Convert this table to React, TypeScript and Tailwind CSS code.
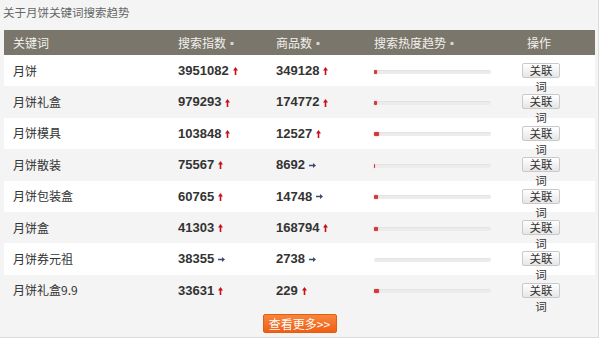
import type { ReactNode } from "react";

type Trend = "up" | "flat";

const ROWS: {
  word: string;
  index: string;
  indexTrend: Trend;
  goods: string;
  goodsTrend: Trend;
  heat: number;
}[] = [
  { word: "月饼", index: "3951082", indexTrend: "up", goods: "349128", goodsTrend: "up", heat: 3 },
  { word: "月饼礼盒", index: "979293", indexTrend: "up", goods: "174772", goodsTrend: "up", heat: 3 },
  { word: "月饼模具", index: "103848", indexTrend: "up", goods: "12527", goodsTrend: "up", heat: 5 },
  { word: "月饼散装", index: "75567", indexTrend: "up", goods: "8692", goodsTrend: "flat", heat: 1 },
  { word: "月饼包装盒", index: "60765", indexTrend: "up", goods: "14748", goodsTrend: "flat", heat: 4 },
  { word: "月饼盒", index: "41303", indexTrend: "up", goods: "168794", goodsTrend: "up", heat: 4 },
  { word: "月饼券元祖", index: "38355", indexTrend: "flat", goods: "2738", goodsTrend: "flat", heat: 0 },
  { word: "月饼礼盒9.9", index: "33631", indexTrend: "up", goods: "229", goodsTrend: "up", heat: 5 },
];

const CJK = "font-['Tahoma','Noto_Sans_CJK_SC',sans-serif]";

function Arrow({ trend }: { trend: Trend }) {
  if (trend === "up") {
    return (
      <svg width="5" height="8" viewBox="0 0 5 8" className="ml-[4px] mt-[1px]">
        <path d="M2.5 0 L5 3.5 L3.3 3.5 L3.3 8 L1.7 8 L1.7 3.5 L0 3.5 Z" fill="#c8101a" />
      </svg>
    );
  }
  return (
    <svg width="7" height="5" viewBox="0 0 7 5" className="ml-[4px] mt-[1px]">
      <path d="M7 2.5 L4 0 L4 1.7 L0 1.7 L0 3.3 L4 3.3 L4 5 Z" fill="#3b4a72" />
    </svg>
  );
}

function SortMark() {
  return (
    <svg width="4" height="5" viewBox="0 0 4 5" className="ml-[4px] mt-[1px]">
      <rect x="0.5" y="1" width="3" height="3" fill="#d8d6cf" />
    </svg>
  );
}

function HeadCell({ children, className }: { children: ReactNode; className?: string }) {
  return <div className={`flex items-center ${className ?? ""}`}>{children}</div>;
}

export default function App() {
  return (
    <div className={`h-[339px] w-[600px] bg-white ${CJK}`}>
      <div className="flex h-[338px] w-[599px] flex-col border-r border-b border-[#dcdcdc] bg-[#f4f4f4]">
        <div className="flex h-[30px] items-start pl-[3px] pt-[4px] text-[11.5px] leading-[16px] text-[#666]">
          关于月饼关键词搜索趋势
        </div>

        <div className="ml-[4px] w-[591px]">
          <div className="grid h-[25px] grid-cols-[174px_98px_98px_126px_95px] bg-[#7a766b] text-[12px] text-[#f2f1ec]">
            <HeadCell className="pl-[9px]">关键词</HeadCell>
            <HeadCell>
              搜索指数
              <SortMark />
            </HeadCell>
            <HeadCell>
              商品数
              <SortMark />
            </HeadCell>
            <HeadCell>
              搜索热度趋势
              <SortMark />
            </HeadCell>
            <HeadCell className="pl-[27px]">操作</HeadCell>
          </div>

          {ROWS.map((r, i) => (
            <div
              key={r.word}
              className={`grid h-[31.4px] grid-cols-[174px_98px_98px_126px_95px] ${
                i % 2 === 0 ? "bg-white" : "bg-[#f4f4f4]"
              }`}
            >
              <div className="flex items-center pl-[9px] text-[12px] text-[#333]">{r.word}</div>
              <div className="flex items-center font-['Liberation_Sans',sans-serif] text-[13px] font-bold text-[#333]">
                {r.index}
                <Arrow trend={r.indexTrend} />
              </div>
              <div className="flex items-center font-['Liberation_Sans',sans-serif] text-[13px] font-bold text-[#333]">
                {r.goods}
                <Arrow trend={r.goodsTrend} />
              </div>
              <div className="flex items-center pt-[2px]">
                <div className="flex h-[4px] w-[117px] rounded-[2px] bg-[#ececec] shadow-[inset_0_1px_1px_rgba(0,0,0,0.04)]">
                  {r.heat > 0 && (
                    <div
                      className="h-[4px] rounded-[1px] bg-[#d23a3c] shadow-[0_0_2px_#f3a0a0]"
                      style={{ width: r.heat }}
                    />
                  )}
                </div>
              </div>
              <div className="flex h-[31.4px] flex-col items-start pl-[22px] pt-[8px]">
                <button className="h-[15px] w-[38px] rounded-[2px] border border-[#c9c9c9] bg-gradient-to-b from-white to-[#e6e6e6] text-center text-[11.5px] leading-[13px] text-[#333]">
                  关联
                </button>
                <div className="mt-[2px] h-[12px] w-[38px] text-center text-[11.5px] leading-[12px] text-[#333]">
                  词
                </div>
              </div>
            </div>
          ))}

          <div className="flex justify-center pt-[8px]">
            <button className="h-[19px] w-[74px] rounded-[2px] border border-[#e0600f] bg-gradient-to-b from-[#f8853b] to-[#f05e12] text-[12px] leading-[17px] text-white">
              查看更多&gt;&gt;
            </button>
          </div>
        </div>
      </div>
    </div>
  );
}
